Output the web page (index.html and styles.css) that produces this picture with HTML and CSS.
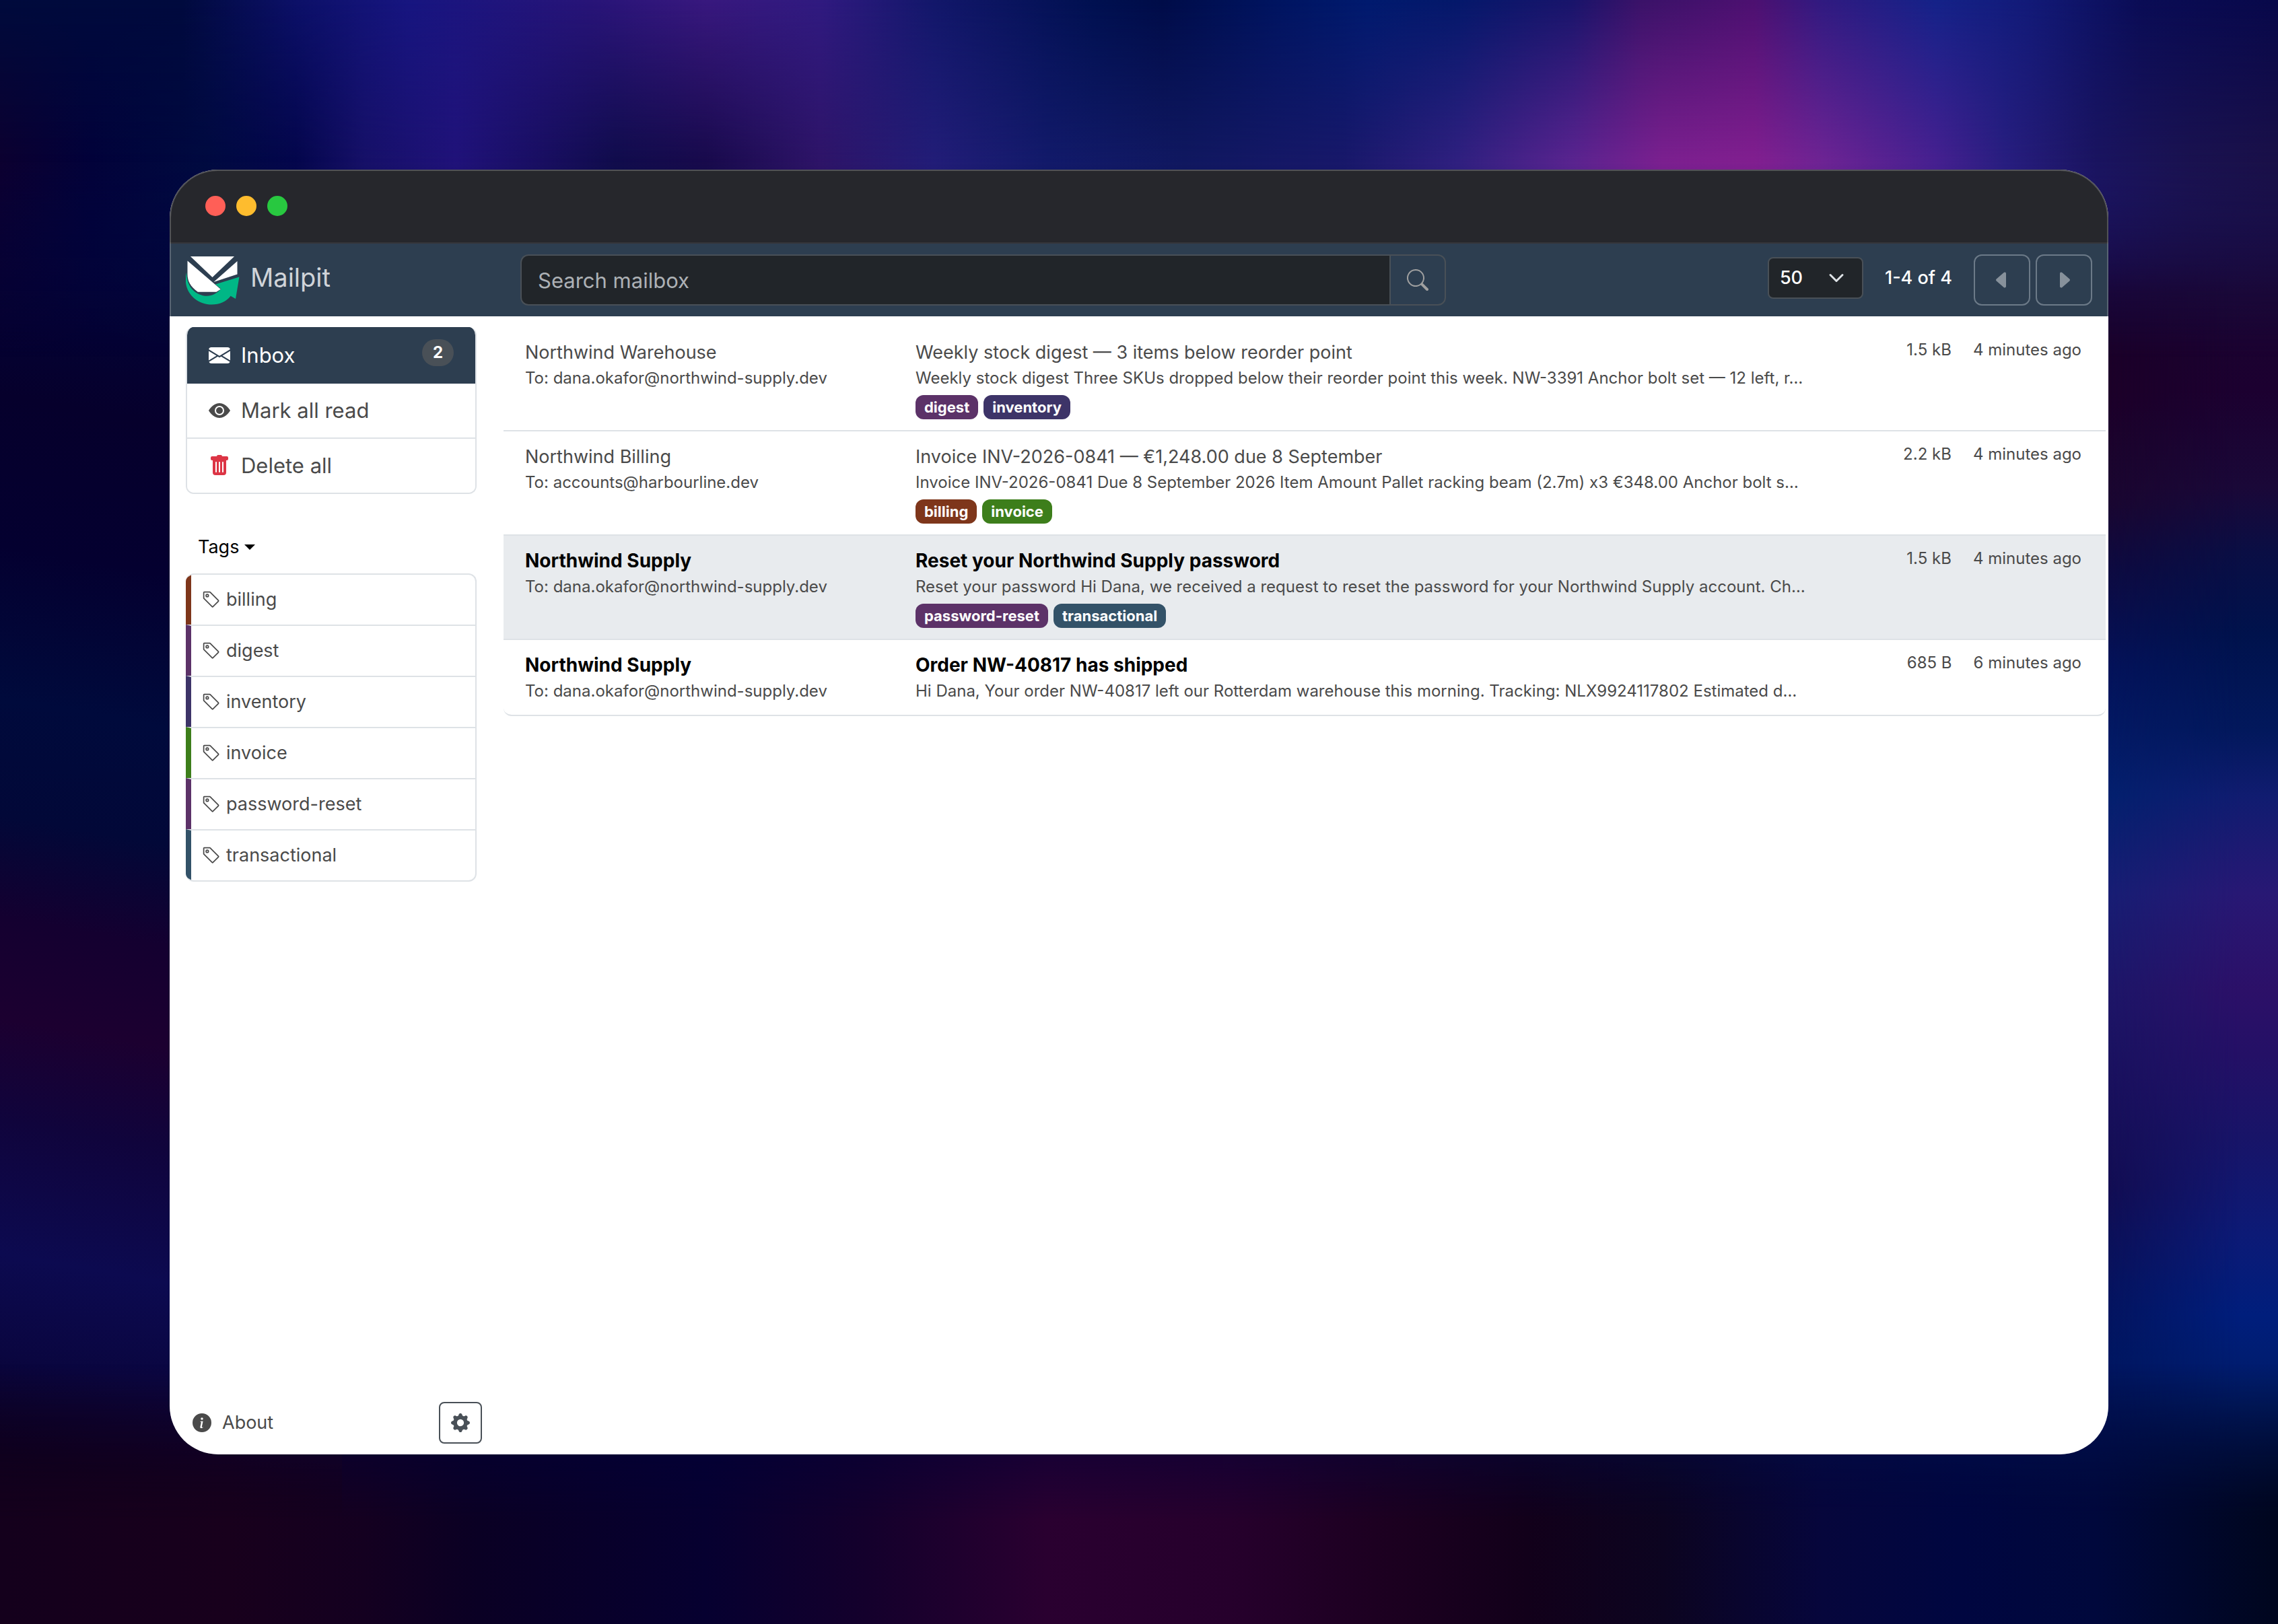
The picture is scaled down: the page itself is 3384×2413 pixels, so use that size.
FILE: index.html
```html
<!DOCTYPE html>
<html lang="en">
<head>
<meta charset="utf-8">
<meta name="viewport" content="width=device-width, initial-scale=1">
<title>Mailpit</title>
<link rel="stylesheet" href="styles.css">
</head>
<body>
<svg class="sprite" aria-hidden="true">
  <symbol id="i-envelope" viewBox="0 0 16 16"><path d="M.05 3.555A2 2 0 0 1 2 2h12a2 2 0 0 1 1.95 1.555L8 8.414zM0 4.697v7.104l5.803-3.558zM6.761 8.83l-6.57 4.027A2 2 0 0 0 2 14h12a2 2 0 0 0 1.808-1.144l-6.57-4.027L8 9.586zm3.436-.586L16 11.801V4.697z"/></symbol>
  <symbol id="i-eye" viewBox="0 0 16 16"><path d="M10.5 8a2.5 2.5 0 1 1-5 0 2.5 2.5 0 0 1 5 0"/><path d="M0 8s3-5.5 8-5.5S16 8 16 8s-3 5.5-8 5.5S0 8 0 8m8 3.5a3.5 3.5 0 1 0 0-7 3.5 3.5 0 0 0 0 7"/></symbol>
  <symbol id="i-trash" viewBox="0 0 16 16"><path d="M2.5 1a1 1 0 0 0-1 1v1a1 1 0 0 0 1 1H3v9a2 2 0 0 0 2 2h6a2 2 0 0 0 2-2V4h.5a1 1 0 0 0 1-1V2a1 1 0 0 0-1-1H10a1 1 0 0 0-1-1H7a1 1 0 0 0-1 1zm3 4a.5.5 0 0 1 .5.5v7a.5.5 0 0 1-1 0v-7a.5.5 0 0 1 .5-.5M8 5a.5.5 0 0 1 .5.5v7a.5.5 0 0 1-1 0v-7A.5.5 0 0 1 8 5m3 .5v7a.5.5 0 0 1-1 0v-7a.5.5 0 0 1 1 0"/></symbol>
  <symbol id="i-tag" viewBox="0 0 16 16"><path d="M6 4.5a1.5 1.5 0 1 1-3 0 1.5 1.5 0 0 1 3 0m-1 0a.5.5 0 1 0-1 0 .5.5 0 0 0 1 0"/><path d="M2 1h4.586a1 1 0 0 1 .707.293l7 7a1 1 0 0 1 0 1.414l-4.586 4.586a1 1 0 0 1-1.414 0l-7-7A1 1 0 0 1 1 6.586V2a1 1 0 0 1 1-1m0 5.586 7 7L13.586 9l-7-7H2z"/></symbol>
  <symbol id="i-info" viewBox="0 0 16 16"><path d="M8 16A8 8 0 1 0 8 0a8 8 0 0 0 0 16m.93-9.412-1 4.705c-.07.34.029.533.304.533.194 0 .487-.07.686-.246l-.088.416c-.287.346-.92.598-1.465.598-.703 0-1.002-.422-.808-1.319l.738-3.468c.064-.293.006-.399-.287-.47l-.451-.081.082-.381 2.29-.287zM8 5.5a1 1 0 1 1 0-2 1 1 0 0 1 0 2"/></symbol>
  <symbol id="i-gear" viewBox="0 0 16 16"><path d="M9.405 1.05c-.413-1.4-2.397-1.4-2.81 0l-.1.34a1.464 1.464 0 0 1-2.105.872l-.31-.17c-1.283-.698-2.686.705-1.987 1.987l.169.311c.446.82.023 1.841-.872 2.105l-.34.1c-1.4.413-1.4 2.397 0 2.81l.34.1a1.464 1.464 0 0 1 .872 2.105l-.17.31c-.698 1.283.705 2.686 1.987 1.987l.311-.169a1.464 1.464 0 0 1 2.105.872l.1.34c.413 1.4 2.397 1.4 2.81 0l.1-.34a1.464 1.464 0 0 1 2.105-.872l.31.17c1.283.698 2.686-.705 1.987-1.987l-.169-.311a1.464 1.464 0 0 1 .872-2.105l.34-.1c1.4-.413 1.4-2.397 0-2.81l-.34-.1a1.464 1.464 0 0 1-.872-2.105l.17-.31c.698-1.283-.705-2.686-1.987-1.987l-.311.169a1.464 1.464 0 0 1-2.105-.872zM8 10.93a2.929 2.929 0 1 1 0-5.86 2.929 2.929 0 0 1 0 5.858z"/></symbol>
  <symbol id="i-search" viewBox="0 0 16 16"><path d="M11.742 10.344a6.5 6.5 0 1 0-1.397 1.398h-.001q.044.06.098.115l3.85 3.85a1 1 0 0 0 1.415-1.414l-3.85-3.85a1 1 0 0 0-.115-.1zM12 6.5a5.5 5.5 0 1 1-11 0 5.5 5.5 0 0 1 11 0"/></symbol>
  <symbol id="i-prev" viewBox="0 0 16 16"><path d="m3.86 8.753 5.482 4.796c.646.566 1.658.106 1.658-.753V3.204a1 1 0 0 0-1.659-.753l-5.48 4.796a1 1 0 0 0 0 1.506z"/></symbol>
  <symbol id="i-next" viewBox="0 0 16 16"><path d="m12.14 8.753-5.482 4.796c-.646.566-1.658.106-1.658-.753V3.204a1 1 0 0 1 1.659-.753l5.48 4.796a1 1 0 0 1 0 1.506z"/></symbol>
</svg>

<div class="backdrop" aria-hidden="true">
  <span class="glow glow-left"></span>
  <span class="glow glow-right"></span>
  <span class="glow glow-edge"></span>
  <span class="glow glow-low"></span>
  <span class="glow glow-high"></span>
  <span class="glow glow-top"></span>
</div>

<div class="window">
  <div class="titlebar">
    <span class="light light-close"></span>
    <span class="light light-min"></span>
    <span class="light light-max"></span>
  </div>

  <header class="navbar">
    <a class="brand" href="#">
      <svg class="logo" viewBox="6 8 81 74" aria-hidden="true">
        <path fill="#fff" d="M13 9h66L46 40.500z"/>
        <path fill="#fff" d="M8.500 15.500 58.500 58.500 52 62.500H24C13 55 8.500 46 8.500 36z"/>
        <path fill="#fff" d="M83.500 16v20L48 47.500z"/>
        <path fill="#00b786" d="M7 33c0 20 11 33 28 35.500 9 1 17-3 24-10.500l-8.500-7L86.500 40 81 73l-7.500-4.500C67 77 57 81.500 45 81.500 21 81.500 0 61 7 33z"/>
      </svg>
      <span>Mailpit</span>
    </a>
    <form class="search" role="search">
      <input class="search-input" type="text" placeholder="Search mailbox" aria-label="Search mailbox">
      <button class="search-button" type="button" aria-label="Search"><svg class="icon-32"><use href="#i-search"/></svg></button>
    </form>
    <div class="pager">
      <div class="paging">
        <select class="page-size" aria-label="Messages per page"><option>50</option></select>
        <span>1-4 of 4</span>
      </div>
      <button class="page-button" type="button" aria-label="Previous page"><svg class="icon-32"><use href="#i-prev"/></svg></button>
      <button class="page-button" type="button" aria-label="Next page"><svg class="icon-32"><use href="#i-next"/></svg></button>
    </div>
  </header>

  <div class="content">
    <aside class="sidebar">
      <nav class="list menu">
        <a class="menu-item active" href="#"><svg class="icon-32"><use href="#i-envelope"/></svg>Inbox<span class="count">2</span></a>
        <button class="menu-item" type="button"><svg class="icon-32"><use href="#i-eye"/></svg>Mark all read</button>
        <button class="menu-item" type="button"><svg class="icon-32 danger"><use href="#i-trash"/></svg>Delete all</button>
      </nav>
      <button class="tags-toggle" type="button">Tags</button>
      <nav class="list tags">
        <a class="tag-item c-billing" href="#"><svg class="icon-28"><use href="#i-tag"/></svg>billing</a>
        <a class="tag-item c-digest" href="#"><svg class="icon-28"><use href="#i-tag"/></svg>digest</a>
        <a class="tag-item c-inventory" href="#"><svg class="icon-28"><use href="#i-tag"/></svg>inventory</a>
        <a class="tag-item c-invoice" href="#"><svg class="icon-28"><use href="#i-tag"/></svg>invoice</a>
        <a class="tag-item c-reset" href="#"><svg class="icon-28"><use href="#i-tag"/></svg>password-reset</a>
        <a class="tag-item c-transactional" href="#"><svg class="icon-28"><use href="#i-tag"/></svg>transactional</a>
      </nav>
      <div class="sidebar-footer">
        <a class="about" href="#"><svg class="icon-28"><use href="#i-info"/></svg>About</a>
        <button class="settings" type="button" aria-label="Settings"><svg class="icon-28"><use href="#i-gear"/></svg></button>
      </div>
    </aside>

    <main class="messages">
      <a class="message" href="#">
        <div class="who"><div class="title">Northwind Warehouse</div><div class="sub">To: dana.okafor@northwind-supply.dev</div></div>
        <div class="what"><div class="title">Weekly stock digest — 3 items below reorder point</div><div class="sub">Weekly stock digest Three SKUs dropped below their reorder point this week. NW-3391 Anchor bolt set — 12 left, r…</div>
          <div class="badges"><span class="badge c-digest">digest</span><span class="badge c-inventory">inventory</span></div></div>
        <div class="meta"><span>1.5 kB</span><span>4 minutes ago</span></div>
      </a>
      <a class="message" href="#">
        <div class="who"><div class="title">Northwind Billing</div><div class="sub">To: accounts@harbourline.dev</div></div>
        <div class="what"><div class="title">Invoice INV-2026-0841 — €1,248.00 due 8 September</div><div class="sub">Invoice INV-2026-0841 Due 8 September 2026 Item Amount Pallet racking beam (2.7m) x3 €348.00 Anchor bolt s…</div>
          <div class="badges"><span class="badge c-billing">billing</span><span class="badge c-invoice">invoice</span></div></div>
        <div class="meta"><span>2.2 kB</span><span>4 minutes ago</span></div>
      </a>
      <a class="message unread selected" href="#">
        <div class="who"><div class="title">Northwind Supply</div><div class="sub">To: dana.okafor@northwind-supply.dev</div></div>
        <div class="what"><div class="title">Reset your Northwind Supply password</div><div class="sub">Reset your password Hi Dana, we received a request to reset the password for your Northwind Supply account. Ch…</div>
          <div class="badges"><span class="badge c-reset">password-reset</span><span class="badge c-transactional">transactional</span></div></div>
        <div class="meta"><span>1.5 kB</span><span>4 minutes ago</span></div>
      </a>
      <a class="message unread" href="#">
        <div class="who"><div class="title">Northwind Supply</div><div class="sub">To: dana.okafor@northwind-supply.dev</div></div>
        <div class="what"><div class="title">Order NW-40817 has shipped</div><div class="sub">Hi Dana, Your order NW-40817 left our Rotterdam warehouse this morning. Tracking: NLX9924117802 Estimated d…</div></div>
        <div class="meta"><span>685 B</span><span>6 minutes ago</span></div>
      </a>
    </main>
  </div>
</div>
</body>
</html>
```
FILE: styles.css
```css
* { box-sizing: border-box; }

body {
  margin: 0;
  min-height: 100vh;
  padding: 252px;
  display: flex;
  position: relative;
  font-family: Inter, "Liberation Sans", sans-serif;
  font-size: 27px;
  line-height: 42px;
  color: #4a4a4a;
  background: #02023a;
}

a { color: inherit; text-decoration: none; }
button, input, select { font: inherit; color: inherit; margin: 0; }
svg { display: block; flex: none; fill: currentColor; }
.sprite { position: absolute; width: 0; height: 0; }
.icon-32 { width: 32px; height: 32px; }
.icon-28 { width: 28px; height: 28px; }

/* Wallpaper */
.backdrop { position: absolute; inset: 0; overflow: hidden; }
.glow { position: absolute; inset: 0; }
.glow-left {
  right: 85%;
  background: linear-gradient(190deg, #000a40 0%, #000640 13%, #02043a 18%, #06002c 27%, #040030 36%, #000a3c 45%, #020838 52%, #140030 58%, #1c0030 64%, #10043c 70%, #0c0a50 78%, #0a0640 84%, #080020 90%, #14001c 95%, #18001c 100%);
}
.glow-right {
  left: 50%;
  background: linear-gradient(#2a2080 8%, #1a1050 13%, #180028 18%, #1c0028 24%, #1a0630 31%, #0e0a40 35%, #04125a 41%, #02206e 49%, #161e74 55%, #1c1668 61%, #18105c 67%, #120c50 73%, #06125c 79%, #001660 84%, #00104c 90%, #000834 95%, #000320 100%);
  mask-image: linear-gradient(90deg, transparent, #000 80%);
}
.glow-edge {
  left: 92%;
  background: linear-gradient(#141050 8%, #160c48 13%, #1a0430 18%, #1c0030 24%, #1a0838 30%, #0a0e44 34%, #00124c 39%, #02185c 45%, #101c70 49%, #281874 55%, #2c1068 61%, #241066 65%, #181468 70%, #0c1a76 76%, #001e7c 81%, #001c68 86%, #001450 91%, #000820 96%, #000014 100%);
  mask-image: linear-gradient(90deg, transparent, #000 80%);
}
.glow-low {
  top: 84%;
  background: linear-gradient(90deg, #14001c 0%, #18001c 10%, #140020 16%, #0a0024 21%, #060030 31%, #14002c 38%, #2a0030 46%, #26002c 54%, #1c0020 61%, #12001a 67%, #0c0420 73%, #06063c 80%, #000640 86%, #00083c 92%, #00061e 100%);
  mask-image: linear-gradient(transparent, #000 60%);
}
.glow-high {
  bottom: 78%;
  background: linear-gradient(90deg, #0c0030 0%, #02023a 4%, #000a40 9%, #04064c 13%, #161068 16%, #20127a 20%, #180e60 24%, #100c4c 27%, #180a4c 31%, #2e1468 36%, #221d78 41%, #121a6a 46%, #101860 52%, #18186a 59%, #302080 64%, #5a2490 69%, #7c2090 73%, #821f90 77%, #6e2494 80%, #462090 85%, #281e80 88%, #1a1460 92%, #1a1250 96%, #1a1048 100%);
  mask-image: linear-gradient(#000 45%, transparent);
}
.glow-top {
  bottom: 90%;
  background: linear-gradient(90deg, #000a3c 0%, #000a3e 8%, #0c1068 13%, #171580 18%, #281478 26%, #38187e 31%, #301a80 36%, #12176a 41%, #001050 48%, #000c48 51%, #001460 56%, #001a6e 60%, #04186a 64%, #18146a 69%, #3a1268 72%, #4c1070 77%, #301a80 80%, #142288 85%, #121a78 89%, #0a0c55 94%, #08084a 100%);
  mask-image: linear-gradient(#000, transparent);
}

/* Window */
.window {
  position: relative;
  flex: 1;
  min-width: 0;
  display: flex;
  flex-direction: column;
  overflow: hidden;
  border-radius: 72px;
  background: #fff;
}
.window::after {
  content: "";
  position: absolute;
  inset: 0;
  border: 2px solid rgba(255, 255, 255, 0.2);
  border-radius: 72px;
  pointer-events: none;
}
.titlebar {
  display: flex;
  align-items: center;
  gap: 16px;
  height: 110px;
  padding: 0 53px;
  background: #26272c;
  border-bottom: 2px solid #35363a;
}
.light { width: 30px; height: 30px; border-radius: 50%; }
.light-close { background: #ff5f57; }
.light-min { background: #febc2e; }
.light-max { background: #28c840; }

.navbar {
  display: grid;
  grid-template-columns: 497px minmax(0, 1375px) 1fr;
  align-items: center;
  padding: 16px 24px;
  background: #2d3e50;
}
.brand {
  display: flex;
  align-items: flex-start;
  gap: 16px;
  color: #d0d4d9;
  font-size: 38px;
  line-height: 65px;
}
.logo { width: 80px; height: 73px; }
.search { display: flex; }
.search-input {
  flex: 1;
  min-width: 0;
  height: 76px;
  padding: 0 24px;
  border: 2px solid #495057;
  border-right: 0;
  border-radius: 12px 0 0 12px;
  background: #212529;
  color: #dee2e6;
  font-size: 31px;
}
.search-input::placeholder { color: #adb1b5; opacity: 1; }
.search-button {
  width: 84px;
  height: 76px;
  padding: 0 24px;
  border: 2px solid #495057;
  border-radius: 0 12px 12px 0;
  background: transparent;
  color: #a0a0a0;
}
.pager { display: flex; justify-content: flex-end; gap: 8px; }
.paging {
  display: flex;
  align-items: center;
  gap: 32px;
  height: 70px;
  margin-right: 24px;
  color: #fff;
  font-weight: 500;
}
.page-size {
  appearance: none;
  width: 142px;
  height: 62px;
  padding: 0 16px;
  border: 2px solid #495057;
  border-radius: 8px;
  background: #212529 url("data:image/svg+xml,%3csvg xmlns='http://www.w3.org/2000/svg' viewBox='0 0 16 16'%3e%3cpath fill='none' stroke='%23dee2e6' stroke-linecap='round' stroke-linejoin='round' stroke-width='2' d='m2 5 6 6 6-6'/%3e%3c/svg%3e") no-repeat right 26px center / 24px 24px;
}
.page-button {
  width: 84px;
  height: 76px;
  padding: 0 24px;
  border: 2px solid #6c7a88;
  border-radius: 12px;
  background: transparent;
  color: #87919b;
}

/* Sidebar */
.content { flex: 1; display: flex; }
.sidebar {
  width: 456px;
  flex: none;
  display: flex;
  flex-direction: column;
  padding: 16px 0 16px 24px;
}
.list {
  display: flex;
  flex-direction: column;
  overflow: hidden;
  border: 2px solid #dee2e6;
  border-radius: 12px;
}
.menu { border-top: 0; }
.menu-item {
  display: flex;
  align-items: center;
  gap: 16px;
  padding: 16px 32px;
  border: 0;
  border-top: 2px solid #dee2e6;
  background: #fff;
  font-size: 31px;
  line-height: 48px;
  text-align: left;
}
.menu-item.active {
  margin: 0 -2px;
  padding: 16px 34px;
  border-color: #2d3e50;
  background: #2d3e50;
  color: #fff;
}
.active + .menu-item { border-top-color: #2d3e50; }
.count {
  align-self: flex-start;
  margin-left: auto;
  padding: 8px 16px;
  border-radius: 20px;
  background: #495057;
  color: #fff;
  font-size: 24px;
  font-weight: 700;
  line-height: 24px;
}
.danger { color: #dc3545; }
.tags-toggle {
  align-self: flex-start;
  display: flex;
  align-items: center;
  gap: 8px;
  margin-top: 50px;
  padding: 8px 18px;
  border: 0;
  background: none;
  color: #000;
}
.tags-toggle::after {
  content: "";
  border: 8px solid transparent;
  border-top-color: #000;
  border-bottom: 0;
}
.tags { margin-top: 10px; border-left: 0; }
.tag-item {
  display: flex;
  align-items: center;
  gap: 8px;
  padding: 16px;
  border-left: 8px solid var(--tag);
}
.tag-item + .tag-item { border-top: 2px solid #dee2e6; }
.sidebar-footer {
  display: flex;
  align-items: center;
  justify-content: space-between;
  margin: auto -8px 0 10px;
}
.about { display: flex; align-items: center; gap: 16px; }
.settings {
  height: 62px;
  padding: 0 16px;
  border: 2px solid #495057;
  border-radius: 8px;
  background: #fff;
  color: #495057;
}

.c-billing { --tag: #7e361b; }
.c-digest, .c-reset { --tag: #5c3268; }
.c-inventory { --tag: #3d3468; }
.c-invoice { --tag: #3d7e1b; }
.c-transactional { --tag: #335268; }

/* Message list */
.messages {
  flex: 1;
  min-width: 0;
  display: flex;
  flex-direction: column;
  padding: 16px 4px 0 40px;
}
.message {
  display: grid;
  grid-template-columns: 580px minmax(0, 1fr) 388px;
  padding: 16px 36px 16px 32px;
  border-bottom: 2px solid #dee2e6;
}
.message:last-child { border-radius: 0 0 12px 12px; }
.selected { background: #e8ebee; }
.what { min-height: 79px; }
.title, .sub { overflow: hidden; white-space: nowrap; text-overflow: ellipsis; }
.title { line-height: 43px; }
.sub { font-size: 24px; line-height: 34px; }
.unread .title { color: #000; font-size: 28px; font-weight: 700; }
.badges { display: flex; gap: 8px; padding-top: 8px; height: 44px; }
.badge {
  height: 36px;
  padding: 0 13px;
  border-radius: 12px;
  background: var(--tag);
  color: #fff;
  font-size: 22px;
  font-weight: 700;
  line-height: 36px;
}
.meta {
  display: flex;
  justify-content: flex-end;
  gap: 32px;
  font-size: 24px;
  line-height: 36px;
}
```
